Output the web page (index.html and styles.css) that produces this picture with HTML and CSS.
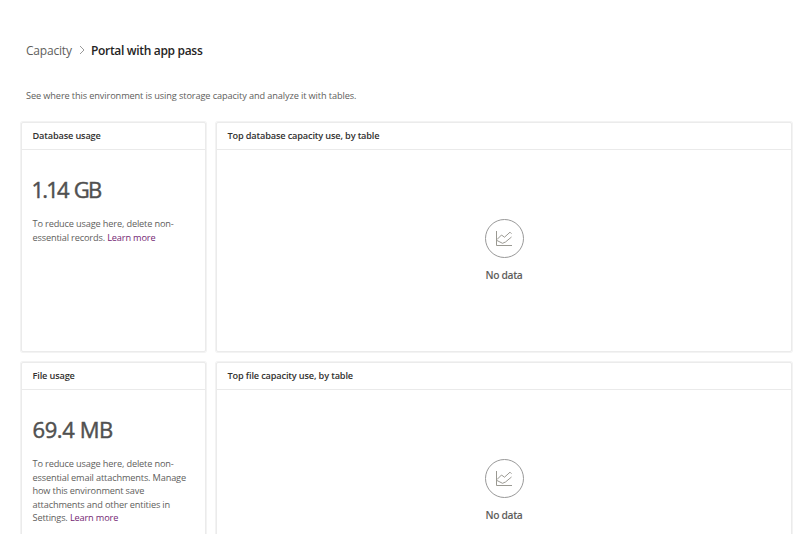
FILE: index.html
```html
<!DOCTYPE html>
<html lang="en">
<head>
<meta charset="utf-8">
<title>Capacity</title>
<link rel="stylesheet" href="styles.css">
</head>
<body>
<nav class="crumbs">
  <a class="crumb">Capacity</a>
  <svg class="chevron" viewBox="0 0 6 10"><path d="M1 1l4 4-4 4"/></svg>
  <span class="current">Portal with app pass</span>
</nav>
<p class="intro">See where this environment is using storage capacity and analyze it with tables.</p>
<main class="grid">
  <section class="card">
    <h2>Database usage</h2>
    <div class="usage">
      <div class="amount tight">1.14 GB</div>
      <p>To reduce usage here, delete non-<br>essential records. <a>Learn more</a></p>
    </div>
  </section>
  <section class="card">
    <h2>Top database capacity use, by table</h2>
    <div class="empty">
      <svg class="chart" viewBox="0 0 40 40"><circle cx="20.5" cy="19.5" r="19"/><g><path d="M12.5 12v14.5h15.5"/><path d="M13 20.5l4.5-4.5 3 2.2 5.5-5 1.5 1.5"/><path d="M13 21.5l5.5 2.8 3-1.3 6-5"/></g></svg>
      <span class="nodata">No data</span>
    </div>
  </section>
  <section class="card">
    <h2>File usage</h2>
    <div class="usage">
      <div class="amount">69.4 MB</div>
      <p>To reduce usage here, delete non-<br>essential email attachments. Manage<br>how this environment save<br>attachments and other entities in<br>Settings. <a>Learn more</a></p>
    </div>
  </section>
  <section class="card">
    <h2>Top file capacity use, by table</h2>
    <div class="empty">
      <svg class="chart" viewBox="0 0 40 40"><circle cx="20.5" cy="19.5" r="19"/><g><path d="M12.5 12v14.5h15.5"/><path d="M13 20.5l4.5-4.5 3 2.2 5.5-5 1.5 1.5"/><path d="M13 21.5l5.5 2.8 3-1.3 6-5"/></g></svg>
      <span class="nodata">No data</span>
    </div>
  </section>
</main>
</body>
</html>
```
FILE: styles.css
```css
* { box-sizing: border-box; }
html { overflow: hidden; }
body {
  margin: 0;
  padding: 40px 8px 0 21px;
  height: 534px;
  overflow: hidden;
  background: #fff;
  color: #605e5c;
  font-family: "Open Sans", "Noto Sans", sans-serif;
  font-size: 9.2px;
}
.crumbs {
  display: flex;
  align-items: center;
  height: 20px;
  padding-left: 5px;
  font-size: 12px;
  white-space: nowrap;
}
.crumb { width: 46px; letter-spacing: -0.2px; }
.chevron { width: 6px; height: 10px; margin: 0 6px 0 7px; fill: none; stroke: #999; stroke-width: 1; }
.current { color: #252423; font-weight: 600; letter-spacing: -0.32px; }
.intro {
  margin: 28px 0 0 5px;
  height: 16px;
  line-height: 16px;
  letter-spacing: -0.11px;
  white-space: nowrap;
}
.grid {
  display: grid;
  grid-template-columns: 185px 1fr;
  grid-auto-rows: 230px;
  gap: 10px;
  margin-top: 18px;
}
.card {
  border: 1px solid #ebebeb;
  border-radius: 2px;
  box-shadow: 0 0 0 1px #f3f3f3;
}
h2 {
  margin: 0;
  height: 27px;
  padding-left: 10.5px;
  border-bottom: 1px solid #eaeaea;
  color: #323130;
  font-size: 9.2px;
  font-weight: 600;
  letter-spacing: -0.15px;
  line-height: 26px;
  white-space: nowrap;
}
.usage { padding: 24px 0 0 10.5px; white-space: nowrap; }
.amount {
  height: 30px;
  color: #505050;
  font-size: 22px;
  line-height: 30px;
  letter-spacing: -0.4px;
  -webkit-text-stroke: 0.45px #505050;
}
.amount.tight { margin-left: -1px; letter-spacing: -1.8px; word-spacing: 2px; }
.usage p { margin: 13px 0 0; line-height: 13.5px; letter-spacing: -0.15px; }
.usage a { color: #742774; }
.empty { display: flex; flex-direction: column; align-items: center; padding-top: 69px; }
.chart { width: 40px; height: 40px; fill: none; stroke: #999; stroke-width: 1; }
.chart g { stroke: #8e8d86; stroke-width: 0.9; }
.nodata { margin-top: 9px; font-size: 10.3px; font-weight: 600; line-height: 14px; letter-spacing: -0.35px; }
```
